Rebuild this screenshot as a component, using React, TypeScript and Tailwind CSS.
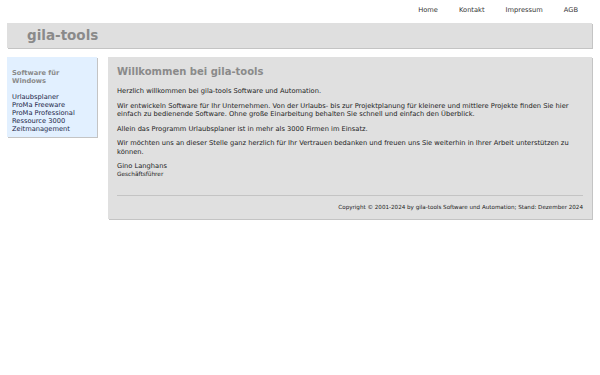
const navItems = ["Home", "Kontakt", "Impressum", "AGB"];
const products = ["Urlaubsplaner", "ProMa Freeware", "ProMa Professional", "Ressource 3000", "Zeitmanagement"];

const App = () => {
    return (
        <div className="min-h-[375px] bg-white text-[6.7px] leading-[8.5px] text-[#222]" style={{fontFamily: '"DejaVu Sans", Verdana, sans-serif'}}>
            <div className="flex justify-end pr-[22px] pt-[6px] h-[23px]">
                {navItems.map((item) => (
                    <a key={item} className="ml-[21px] text-[#333]">{item}</a>
                ))}
            </div>
            <div className="ml-[7px] mr-[8px] h-[25px] bg-[#dfdfdf] shadow-[1px_1px_0_#c4c4c4] flex items-center pl-[20px]">
                <h1 className="text-[13.5px] font-bold text-[#8a8a8a] leading-none">gila-tools</h1>
            </div>
            <div className="flex items-start mt-[9px] pl-[7px] pr-[8px] gap-[11px]">
                <div className="w-[90px] shrink-0 bg-[#e2f0ff] shadow-[1px_1px_0_#c4c4c4] px-[5px] pt-[12px] pb-[4px]">
                    <div className="font-bold text-[#8a8a8a] mb-[8px] leading-[8px]">Software für Windows</div>
                    {products.map((p) => (
                        <a key={p} className="block text-[#1c2648] leading-[8px]">{p}</a>
                    ))}
                </div>
                <div className="flex-1 bg-[#e0e0e0] shadow-[1px_1px_0_#c4c4c4] px-[9px] pt-[10px] pb-[8px]">
                    <h2 className="text-[10px] font-bold text-[#8a8a8a] leading-none mb-[10px]">Willkommen bei gila-tools</h2>
                    <p className="mb-[6px]">Herzlich willkommen bei gila-tools Software und Automation.</p>
                    <p className="mb-[6px]">Wir entwickeln Software für Ihr Unternehmen. Von der Urlaubs- bis zur Projektplanung für kleinere und mittlere Projekte finden Sie hier einfach zu bedienende Software. Ohne große Einarbeitung behalten Sie schnell und einfach den Überblick.</p>
                    <p className="mb-[6px]">Allein das Programm Urlaubsplaner ist in mehr als 3000 Firmen im Einsatz.</p>
                    <p className="mb-[6px]">Wir möchten uns an dieser Stelle ganz herzlich für Ihr Vertrauen bedanken und freuen uns Sie weiterhin in Ihrer Arbeit unterstützen zu können.</p>
                    <p>Gino Langhans</p>
                    <p className="text-[5.8px] leading-[7px]">Geschäftsführer</p>
                    <div className="mt-[17px] border-t border-[#c4c4c4] pt-[7px] text-right text-[5.6px]">
                        Copyright © 2001-2024 by gila-tools Software und Automation; Stand: Dezember 2024
                    </div>
                </div>
            </div>
        </div>
    );
};

export default App;
